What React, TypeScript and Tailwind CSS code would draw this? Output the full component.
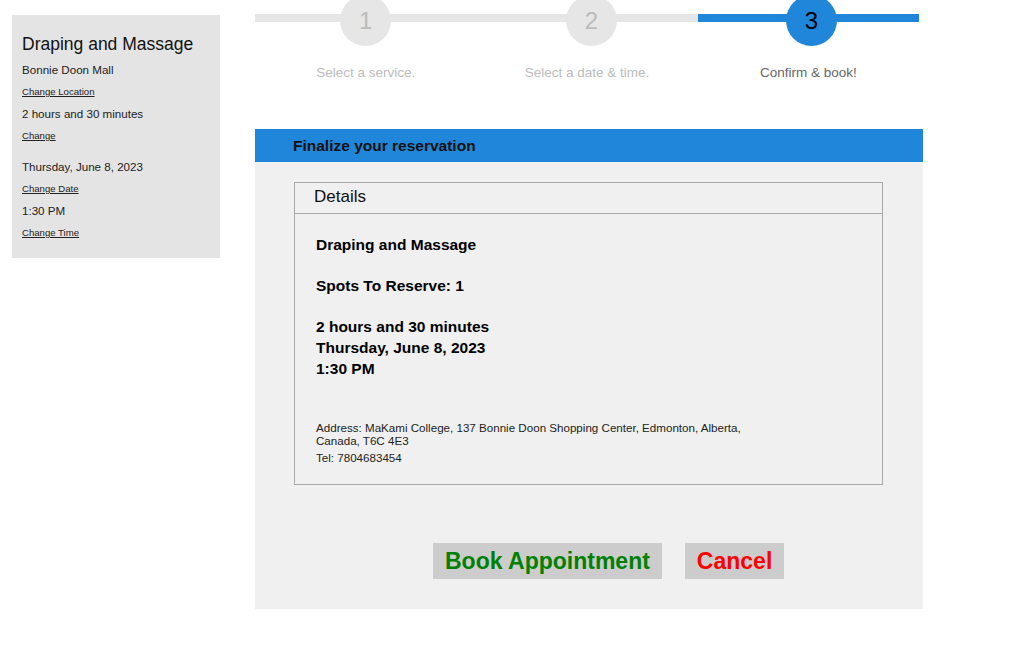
import React from "react";

const steps = [
  { n: "1", label: "Select a service.", active: false, shift: "" },
  { n: "2", label: "Select a date & time.", active: false, shift: "ml-[9px]" },
  { n: "3", label: "Confirm & book!", active: true, shift: "ml-[6px]" },
];

export default function App() {
  return (
    <div
      className="flex w-[1024px] min-h-[653px] bg-white text-black"
      style={{ fontFamily: '"Liberation Sans", Arial, sans-serif' }}
    >
      {/* Sidebar */}
      <div className="ml-[12px] mt-[15px] w-[208px] self-start bg-[#e4e4e4] pl-[10px] pt-[16px] pb-[14px]">
        <div className="text-[17.5px] leading-[26px] text-[#111]">Draping and Massage</div>
        <div className="mt-[2px] text-[11.6px] leading-[22px] text-[#222]">Bonnie Doon Mall</div>
        <div className="text-[9.6px] leading-[22px] underline text-[#222]">Change Location</div>
        <div className="text-[11.6px] leading-[22px] text-[#222]">2 hours and 30 minutes</div>
        <div className="text-[9.6px] leading-[21px] underline text-[#222]">Change</div>
        <div className="mt-[10px] text-[11.6px] leading-[22px] text-[#222]">Thursday, June 8, 2023</div>
        <div className="text-[9.6px] leading-[21px] underline text-[#222]">Change Date</div>
        <div className="mt-[1px] text-[11.6px] leading-[22px] text-[#222]">1:30 PM</div>
        <div className="text-[9.6px] leading-[22px] underline text-[#222]">Change Time</div>
      </div>

      {/* Main */}
      <div className="ml-[35px] w-[668px]">
        {/* Stepper */}
        <div className="-mt-[5px] flex w-[664px]">
          {steps.map((s) => (
            <div key={s.n} className="relative flex flex-1 flex-col items-center">
              <div
                className={
                  "absolute left-0 right-0 top-[19px] h-[8px] " +
                  (s.active ? "bg-[#1f86da]" : "bg-[#e6e6e6]")
                }
              />
              <div
                className={
                  "relative flex h-[51px] w-[51px] items-center justify-center rounded-full text-[24px] " +
                  s.shift +
                  " " +
                  (s.active ? "bg-[#1f86da] text-black" : "bg-[#e6e6e6] text-[#bbbbbb]")
                }
              >
                {s.n}
              </div>
              <div
                className={
                  "mt-[19px] text-[13.5px] leading-[16px] " +
                  (s.active ? "text-[#666666]" : "text-[#bbbbbb]")
                }
              >
                {s.label}
              </div>
            </div>
          ))}
        </div>

        {/* Header */}
        <div className="mt-[48px] h-[33px] bg-[#1f86da] pl-[38px] text-[15.5px] font-bold leading-[33px] text-[#111]">
          Finalize your reservation
        </div>

        {/* Panel */}
        <div className="bg-[#f0f0f0] pt-[20px] pb-[30px]">
          <div className="ml-[39px] w-[589px] border border-[#a9a9a9]">
            <div className="h-[31px] border-b border-[#a9a9a9] pl-[19px] text-[17px] leading-[28px] text-[#111]">
              Details
            </div>
            <div className="pl-[21px] pt-[20px] pb-[20px]">
              <div className="text-[15.5px] font-bold leading-[21px]">Draping and Massage</div>
              <div className="mt-[20px] text-[15.5px] font-bold leading-[21px]">Spots To Reserve: 1</div>
              <div className="mt-[20px] text-[15.5px] font-bold leading-[21px]">
                <div>2 hours and 30 minutes</div>
                <div>Thursday, June 8, 2023</div>
                <div>1:30 PM</div>
              </div>
              <div className="mt-[42px] w-[440px] text-[11.6px] leading-[13px] text-[#222]">
                Address: MaKami College, 137 Bonnie Doon Shopping Center, Edmonton, Alberta, Canada, T6C 4E3
              </div>
              <div className="mt-[4px] text-[11.6px] leading-[13px] text-[#222]">Tel: 7804683454</div>
            </div>
          </div>

          <div className="mt-[58px] ml-[178px] flex gap-[23px]">
            <button className="h-[36px] bg-[#cccccc] px-[12px] text-[23px] font-bold leading-[36px] text-[#008000]">
              Book Appointment
            </button>
            <button className="h-[36px] bg-[#cccccc] px-[12px] text-[23px] font-bold leading-[36px] text-[#ff0000]">
              Cancel
            </button>
          </div>
        </div>
      </div>
    </div>
  );
}
